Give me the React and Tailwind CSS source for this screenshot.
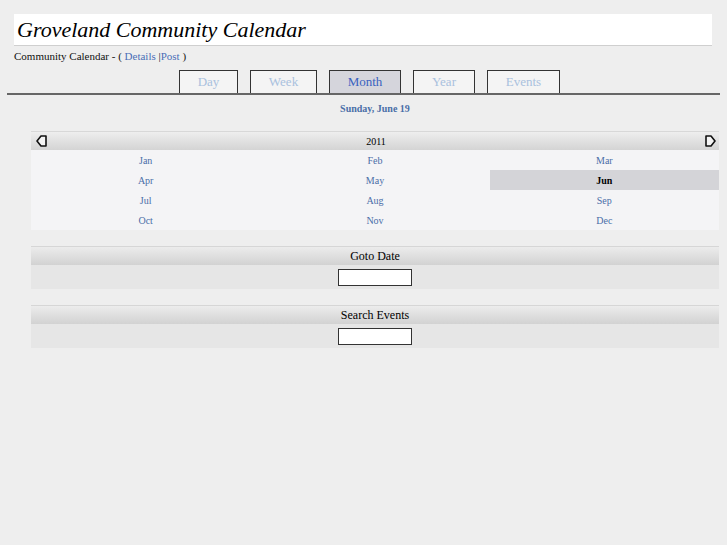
const months = ["Jan", "Feb", "Mar", "Apr", "May", "Jun", "Jul", "Aug", "Sep", "Oct", "Nov", "Dec"];
const tabs = [
  { label: "Day", w: "w-[59px]" },
  { label: "Week", w: "w-[67px]" },
  { label: "Month", w: "w-[72px]", active: true },
  { label: "Year", w: "w-[62px]" },
  { label: "Events", w: "w-[73px]" },
];

function Arrow({ dir }) {
  const d = dir === "left" ? "M1 6 L5 1 H10 V11 H5 Z" : "M11 6 L7 1 H2 V11 H7 Z";
  return (
    <svg width="12" height="12" viewBox="0 0 12 12">
      <path d={d} fill="#f4f4f4" stroke="#111" strokeWidth="1.6" strokeLinejoin="round" />
    </svg>
  );
}

function Box({ title }) {
  return (
    <div className="mt-[16px]">
      <div className="h-[19px] border-t border-[#d6d6d6] bg-gradient-to-b from-[#ececec] to-[#d2d2d2] flex items-center justify-center text-[12px] text-black">
        {title}
      </div>
      <div className="h-[24px] bg-[#e6e6e6] flex items-center justify-center">
        <input className="w-[74px] h-[17px] bg-white border border-[#333] outline-none" />
      </div>
    </div>
  );
}

export default function App() {
  return (
    <div className="min-h-[545px] bg-[#eeeeee] [font-family:'Liberation_Serif',serif] pt-[14px]">
      <div className="ml-[14px] w-[698px] h-[32px] bg-white border-b border-[#cfcfcf] flex items-center pl-[3px]">
        <h1 className="italic text-[22px] text-black leading-none">Groveland Community Calendar</h1>
      </div>
      <div className="ml-[14px] mt-[3px] text-[11px] text-[#111] leading-[14px]">
        Community Calendar - ( <a className="text-[#4a6fb8]">Details</a> |<a className="text-[#4a6fb8]">Post</a> )
      </div>
      <div className="flex gap-[12px] ml-[179px] mt-[7px]">
        {tabs.map((t) => (
          <div
            key={t.label}
            className={`${t.w} h-[23px] border border-b-0 border-[#333] flex items-center justify-center text-[13px] ${
              t.active ? "bg-[#d5d5dc] text-[#3a62c0]" : "bg-[#f4f4f4] text-[#a9c1de]"
            }`}
          >
            {t.label}
          </div>
        ))}
      </div>
      <div className="ml-[7px] w-[713px] h-[2px] bg-[#666]" />
      <div className="ml-[31px] mr-[8px]">
        <div className="text-center text-[10px] font-bold text-[#4a6ea8] mt-[8px] leading-[12px]">Sunday, June 19</div>
        <div className="mt-[16px] bg-[#f4f4f6]">
          <div className="h-[19px] border-t border-[#d8d8d8] bg-gradient-to-b from-[#eeeeee] to-[#d4d4d4] flex items-center justify-between pl-[5px] pr-[3px] text-[10px] text-black">
            <Arrow dir="left" />
            <span>2011</span>
            <Arrow dir="right" />
          </div>
          <div className="grid grid-cols-3">
            {months.map((m) => (
              <div
                key={m}
                className={`h-[20px] flex items-center justify-center text-[10px] ${
                  m === "Jun" ? "bg-[#d4d4d8] text-black font-bold" : "text-[#4a6ea8]"
                }`}
              >
                {m}
              </div>
            ))}
          </div>
        </div>
        <Box title="Goto Date" />
        <Box title="Search Events" />
      </div>
    </div>
  );
}
